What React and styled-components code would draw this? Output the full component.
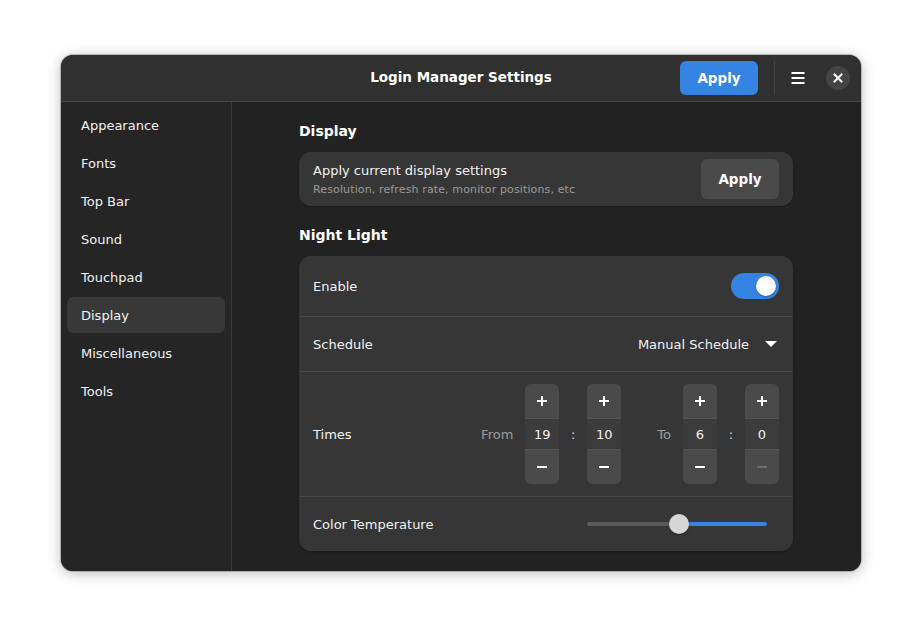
import React from "react";
import styled, { createGlobalStyle } from "styled-components";

const Global = createGlobalStyle`
  html, body { margin: 0; padding: 0; background: #ffffff; }
  body { font-family: "DejaVu Sans", "Noto Sans", sans-serif; }
  * { box-sizing: border-box; }
`;

const Page = styled.div`
  width: 922px;
  height: 638px;
  display: flex;
  align-items: flex-start;
  justify-content: center;
  padding-top: 55px;
`;

const Window = styled.div`
  width: 800px;
  height: 516px;
  border-radius: 12px;
  overflow: hidden;
  background: #222222;
  display: flex;
  flex-direction: column;
  box-shadow: 0 2px 14px rgba(0,0,0,0.28), 0 0 0 1px rgba(0,0,0,0.2);
  color: #ffffff;
`;

const HeaderBar = styled.div`
  height: 47px;
  flex: none;
  background: #303030;
  border-bottom: 1px solid #454545;
  display: flex;
  align-items: center;
  position: relative;
  padding: 0 11px 1px 0;
`;

const Title = styled.div`
  position: absolute;
  left: 0;
  right: 0;
  top: 14px;
  text-align: center;
  font-weight: bold;
  font-size: 13.5px;
  pointer-events: none;
`;

const HeaderEnd = styled.div`
  margin-left: auto;
  display: flex;
  align-items: center;
  height: 100%;
`;

const Button = styled.button`
  font-family: inherit;
  font-weight: bold;
  font-size: 13.5px;
  color: #ffffff;
  border: none;
  border-radius: 6px;
  width: 78px;
  height: ${p => p.$h || 34}px;
  background: ${p => (p.$suggested ? "#3584e4" : "#4a4a4a")};
  cursor: pointer;
`;

const Sep = styled.div`
  width: 1px;
  height: 34px;
  background: #454545;
  margin: 0 11px 0 16px;
`;

const IconBtn = styled.button`
  width: ${p => p.$size}px;
  height: ${p => p.$size}px;
  border-radius: 50%;
  border: none;
  background: ${p => p.$bg || "transparent"};
  display: flex;
  align-items: center;
  justify-content: center;
  padding: 0;
  margin-left: ${p => p.$ml || 0}px;
  color: #fff;
`;

const Body = styled.div`
  flex: 1;
  display: flex;
  min-height: 0;
`;

const Sidebar = styled.nav`
  width: 171px;
  flex: none;
  background: #252525;
  border-right: 1px solid #3a3a3a;
  padding: 5px 6px;
  display: flex;
  flex-direction: column;
  gap: 2px;
`;

const NavItem = styled.div`
  height: 36px;
  display: flex;
  align-items: center;
  padding-left: 14px;
  font-size: 13px;
  border-radius: 6px;
  color: #f2f2f2;
  background: ${p => (p.$active ? "#383838" : "transparent")};
`;

const Content = styled.main`
  flex: 1;
  background: #222222;
  display: flex;
  justify-content: center;
  padding: 20px 1px 0 0;
`;

const Column = styled.div`
  width: 494px;
  display: flex;
  flex-direction: column;
`;

const SectionTitle = styled.h2`
  margin: 0 0 12px 0;
  font-size: 14px;
  font-weight: bold;
  line-height: 18px;
`;

const Card = styled.div`
  background: #363636;
  border-radius: 12px;
  margin-bottom: ${p => p.$mb || 0}px;
  box-shadow: 0 1px 2px rgba(0,0,0,0.25);
  overflow: hidden;
`;

const Row = styled.div`
  height: ${p => p.$h}px;
  display: flex;
  align-items: center;
  padding: 0 14px;
  border-top: ${p => (p.$first ? "none" : "1px solid #474747")};
`;

const RowText = styled.div`
  display: flex;
  flex-direction: column;
  gap: 5px;
`;

const Label = styled.div`
  font-size: 13px;
  color: #f2f2f2;
`;

const Sub = styled.div`
  font-size: 11px;
  color: #9a9a9a;
  letter-spacing: 0.13px;
`;

const End = styled.div`
  margin-left: auto;
  display: flex;
  align-items: center;
`;

const Switch = styled.div`
  width: 48px;
  height: 26px;
  border-radius: 13px;
  background: #3584e4;
  position: relative;
`;

const Knob = styled.div`
  position: absolute;
  top: 3px;
  right: 3px;
  width: 20px;
  height: 20px;
  border-radius: 50%;
  background: #ffffff;
  box-shadow: 0 1px 2px rgba(0,0,0,0.3);
`;

const DropText = styled.span`
  font-size: 13px;
  color: #f2f2f2;
  margin-right: 16px;
`;

const TimeLabel = styled.span`
  font-size: 13px;
  color: #9c9c9c;
  margin-right: 12px;
  margin-left: ${p => p.$ml || 0}px;
`;

const Colon = styled.span`
  font-size: 13px;
  color: #e0e0e0;
  width: 28px;
  text-align: center;
`;

const Spin = styled.div`
  width: 34px;
  height: 100px;
  border-radius: 6px;
  background: #4a4a4a;
  display: grid;
  grid-template-rows: 34px 1fr 34px;
  overflow: hidden;
`;

const SpinCell = styled.div`
  display: flex;
  align-items: center;
  justify-content: center;
  font-size: 13px;
  color: #f2f2f2;
  background: ${p => (p.$value ? "#3c3c3c" : "transparent")};
  border-top: ${p => (p.$value ? "1px solid #555" : "none")};
  border-bottom: ${p => (p.$value ? "1px solid #555" : "none")};
`;

const Slider = styled.div`
  width: 180px;
  height: 20px;
  position: relative;
  margin-right: 12px;
  display: flex;
  align-items: center;
`;

const Track = styled.div`
  width: 100%;
  height: 4px;
  border-radius: 2px;
  background: linear-gradient(to right, #5a5a5a 0 51%, #3584e4 51% 100%);
`;

const Thumb = styled.div`
  position: absolute;
  top: 0;
  width: 20px;
  height: 20px;
  border-radius: 50%;
  background: #d6d6d6;
  box-shadow: 0 1px 2px rgba(0,0,0,0.4);
`;

const Plus = () => (
  <svg width="12" height="12" viewBox="0 0 12 12">
    <path d="M6 1v10M1 6h10" stroke="#fff" strokeWidth="2" />
  </svg>
);
const Minus = ({ dim }) => (
  <svg width="12" height="12" viewBox="0 0 12 12">
    <path d="M1 6h10" stroke={dim ? "#6e6e6e" : "#fff"} strokeWidth="2" />
  </svg>
);

const SpinButton = ({ value, minusDim }) => (
  <Spin>
    <SpinCell><Plus /></SpinCell>
    <SpinCell $value>{value}</SpinCell>
    <SpinCell><Minus dim={minusDim} /></SpinCell>
  </Spin>
);

const nav = ["Appearance", "Fonts", "Top Bar", "Sound", "Touchpad", "Display", "Miscellaneous", "Tools"];

export default function App() {
  const temp = 0.51;
  return (
    <>
      <Global />
      <Page>
        <Window>
          <HeaderBar>
            <Title>Login Manager Settings</Title>
            <HeaderEnd>
              <Button $suggested>Apply</Button>
              <Sep />
              <IconBtn $size={24}>
                <svg width="16" height="16" viewBox="0 0 16 16">
                  <path d="M1.5 3h13M1.5 8h13M1.5 13h13" stroke="#fff" strokeWidth="2" />
                </svg>
              </IconBtn>
              <IconBtn $size={24} $bg="#444444" $ml={16}>
                <svg width="10" height="10" viewBox="0 0 10 10">
                  <path d="M1.5 1.5l7 7M8.5 1.5l-7 7" stroke="#fff" strokeWidth="2" strokeLinecap="square" />
                </svg>
              </IconBtn>
            </HeaderEnd>
          </HeaderBar>
          <Body>
            <Sidebar>
              {nav.map(n => (
                <NavItem key={n} $active={n === "Display"}>{n}</NavItem>
              ))}
            </Sidebar>
            <Content>
              <Column>
                <SectionTitle>Display</SectionTitle>
                <Card $mb={20}>
                  <Row $h={54} $first>
                    <RowText>
                      <Label>Apply current display settings</Label>
                      <Sub>Resolution, refresh rate, monitor positions, etc</Sub>
                    </RowText>
                    <End>
                      <Button $h={40}>Apply</Button>
                    </End>
                  </Row>
                </Card>
                <SectionTitle>Night Light</SectionTitle>
                <Card>
                  <Row $h={60} $first>
                    <Label>Enable</Label>
                    <End>
                      <Switch><Knob /></Switch>
                    </End>
                  </Row>
                  <Row $h={55}>
                    <Label>Schedule</Label>
                    <End>
                      <DropText>Manual Schedule</DropText>
                      <svg width="12" height="8" viewBox="0 0 12 8">
                        <path d="M0 1h12L6 7z" fill="#fff" />
                      </svg>
                      <span style={{ width: 2 }} />
                    </End>
                  </Row>
                  <Row $h={125}>
                    <Label>Times</Label>
                    <End>
                      <TimeLabel>From</TimeLabel>
                      <SpinButton value="19" />
                      <Colon>:</Colon>
                      <SpinButton value="10" />
                      <TimeLabel $ml={36}>To</TimeLabel>
                      <SpinButton value="6" />
                      <Colon>:</Colon>
                      <SpinButton value="0" minusDim />
                    </End>
                  </Row>
                  <Row $h={55}>
                    <Label>Color Temperature</Label>
                    <End>
                      <Slider>
                        <Track />
                        <Thumb style={{ left: `calc(${temp * 100}% - 10px)` }} />
                      </Slider>
                    </End>
                  </Row>
                </Card>
              </Column>
            </Content>
          </Body>
        </Window>
      </Page>
    </>
  );
}
